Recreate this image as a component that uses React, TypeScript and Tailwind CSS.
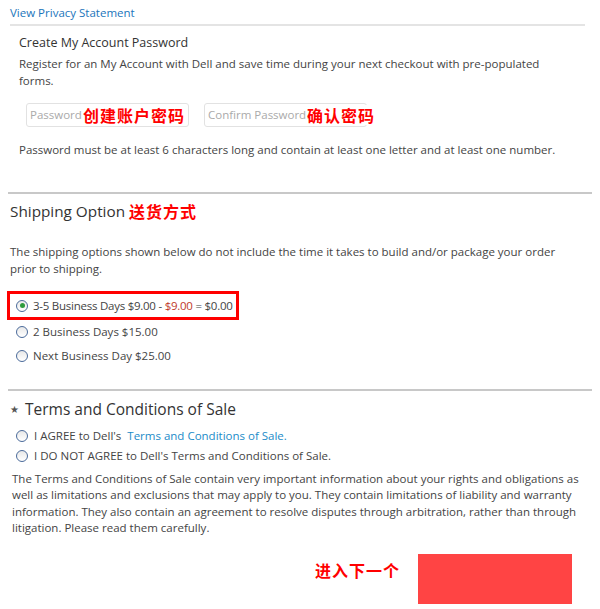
import React from "react";

const Radio = ({ checked = false }: { checked?: boolean }) => (
  <span className="inline-flex h-[12px] w-[12px] shrink-0 items-center justify-center rounded-full border border-[#4a6a9a] bg-gradient-to-b from-[#e8e8e8] to-white">
    {checked && <span className="h-[5px] w-[5px] rounded-full bg-[#2e9b3e]" />}
  </span>
);

const cn = "whitespace-nowrap font-['Noto_Sans_CJK_SC','SimSun',serif] font-bold tracking-[1px] text-[#ff0000]";

export default function App() {
  return (
    <div className="h-[609px] w-[600px] overflow-hidden bg-white font-['Open_Sans','DejaVu_Sans',sans-serif] text-[11.5px] text-[#444]">
      <div className="px-[10px] pt-[5px]">
        <a className="block pb-[3px] text-[11.5px] leading-[16px] text-[#1b75bb]">View Privacy Statement</a>
        <div className="mr-[5px] border-b-2 border-[#e4e4e4]" />
      </div>

      <div className="px-[19px] pt-[8px]">
        <h3 className="text-[12.5px] leading-[18px] text-[#333]">Create My Account Password</h3>
        <p className="mt-[3px] max-w-[546px] leading-[17px]">
          Register for an My Account with Dell and save time during your next checkout with pre-populated forms.
        </p>
        <div className="mt-[14px] flex gap-[15px] pl-[7px]">
          <div className="relative flex h-[24px] w-[163px] items-center rounded-[3px] border border-[#e2e2e2] pl-[3px] text-[#aaa]">
            Password
            <span className={`absolute left-[56px] top-[1px] text-[16px] leading-[20px] ${cn}`}>创建账户密码</span>
          </div>
          <div className="relative flex h-[24px] w-[163px] items-center rounded-[3px] border border-[#e2e2e2] pl-[3px] text-[#aaa]">
            Confirm Password
            <span className={`absolute left-[102px] top-[1px] bg-white text-[16px] leading-[20px] ${cn}`}>确认密码</span>
          </div>
        </div>
        <p className="mt-[14px] leading-[17px]">
          Password must be at least 6 characters long and contain at least one letter and at least one number.
        </p>
      </div>

      <div className="mx-[8px] mt-[34px] border-b-2 border-[#c8c8c8]" />

      <div className="px-[10px] pt-[5px]">
        <h2 className="flex items-center gap-[4px] text-[15.3px] leading-[24px] text-[#333]">
          Shipping Option <span className={`text-[16px] ${cn}`}>送货方式</span>
        </h2>
        <p className="mt-[20px] max-w-[560px] leading-[17px]">
          The shipping options shown below do not include the time it takes to build and/or package your order prior to shipping.
        </p>
        <div className="mt-[14px] -ml-[3px] inline-flex items-center gap-[5px] border-[3px] border-[#ff0000] py-[3px] pl-[6px] pr-[3px] leading-[17px]">
          <Radio checked />
          <span className="tracking-[-0.25px]">
            3-5 Business Days $9.00 - <span className="text-[#c0392b]">$9.00</span> = $0.00
          </span>
        </div>
        <div className="mt-[3px] flex flex-col gap-[7px] pl-[6px] leading-[17px]">
          <div className="flex items-center gap-[5px]">
            <Radio />
            <span>2 Business Days $15.00</span>
          </div>
          <div className="flex items-center gap-[5px]">
            <Radio />
            <span>Next Business Day $25.00</span>
          </div>
        </div>
      </div>

      <div className="mx-[8px] mt-[25px] border-b-2 border-[#c8c8c8]" />

      <div className="px-[10px] pt-[6px]">
        <h2 className="flex items-center gap-[6px] text-[15.5px] leading-[24px] text-[#333]">
          <span className="text-[10px] text-[#555]">★</span>
          Terms and Conditions of Sale
        </h2>
        <div className="mt-[6px] flex flex-col gap-[3px] pl-[6px] leading-[17px]">
          <div className="flex items-center gap-[6px]">
            <Radio />
            <span>
              I AGREE to Dell's <span className="ml-[3px] text-[#1b8bc8]">Terms and Conditions of Sale.</span>
            </span>
          </div>
          <div className="flex items-center gap-[6px]">
            <Radio />
            <span>I DO NOT AGREE to Dell's Terms and Conditions of Sale.</span>
          </div>
        </div>
        <p className="mt-[7px] pl-[2px] pr-[2px] leading-[16.4px]">
          The Terms and Conditions of Sale contain very important information about your rights and obligations as well as limitations and exclusions that may apply to you. They contain limitations of liability and warranty information. They also contain an agreement to resolve disputes through arbitration, rather than through litigation. Please read them carefully.
        </p>
      </div>

      <div className="mt-[17px] flex items-start">
        <span className={`ml-[315px] mt-[5px] w-[103px] text-[16px] leading-[22px] ${cn}`}>进入下一个</span>
        <div className="h-[50px] w-[154px] bg-[#ff4444]" />
      </div>
    </div>
  );
}
